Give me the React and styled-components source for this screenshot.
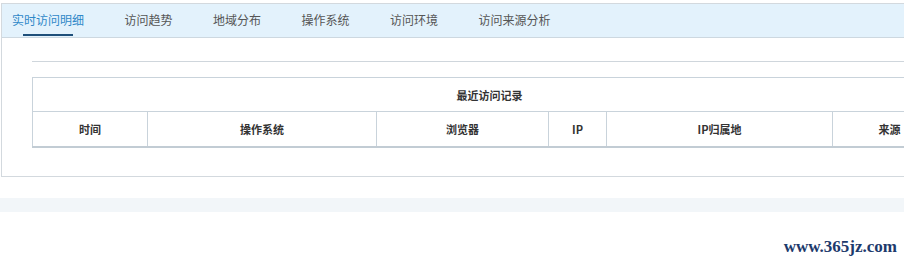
import React from "react";
import styled, { createGlobalStyle } from "styled-components";

const Global = createGlobalStyle`
  html, body { margin: 0; padding: 0; background: #fff; overflow: hidden; }
  body { font-family: "Noto Sans CJK SC", "Noto Sans", sans-serif; color: #333; }
`;

const Page = styled.div`
  width: 904px;
  height: 265px;
  padding-top: 3px;
  box-sizing: border-box;
  display: flex;
  flex-direction: column;
  overflow: hidden;
`;

const Panel = styled.div`
  margin-left: 1px;
  width: 960px;
  border: 1px solid #d3d9de;
  border-right: none;
  box-sizing: border-box;
  padding-bottom: 28px;
`;

const TabBar = styled.div`
  height: 33px;
  background: #e3f2fc;
  border-bottom: 1px solid #cdd8e0;
  display: flex;
  align-items: stretch;
  padding-left: 10px;
  gap: 40.5px;
`;

const Tab = styled.div`
  position: relative;
  display: flex;
  align-items: center;
  font-size: 12px;
  color: ${(p) => (p.$active ? "#2f88c8" : "#555")};
  padding-bottom: 2px;
  &::after {
    content: "";
    display: ${(p) => (p.$active ? "block" : "none")};
    position: absolute;
    left: 50%;
    transform: translateX(-50%);
    bottom: 1px;
    width: 50px;
    height: 2px;
    background: #1e4f7a;
  }
`;

const Body = styled.div`
  padding: 23px 0 0 30px;
`;

const Rule = styled.div`
  height: 1px;
  background: #cfd6dc;
  margin-bottom: 15px;
`;

const Table = styled.table`
  border-collapse: collapse;
  table-layout: fixed;
  width: 914px;
  border-bottom: 2px solid #c2ccd4;
  font-size: 11px;
  font-weight: bold;
  color: #333;
`;

const Cell = styled.th`
  border: 1px solid #c9d3db;
  height: ${(p) => p.$h}px;
  padding: 0;
  text-align: center;
  vertical-align: middle;
  font-weight: bold;
  box-sizing: border-box;
`;

const Band = styled.div`
  margin-top: 21px;
  height: 14px;
  background: #f2f6f9;
`;

const Footer = styled.div`
  display: flex;
  justify-content: flex-end;
  padding: 26px 7px 0 0;
`;

const Watermark = styled.span`
  font-family: "Liberation Serif", "DejaVu Serif", serif;
  font-size: 17px;
  font-weight: bold;
  color: #1d3a6c;
  line-height: 18px;
`;

const tabs = ["实时访问明细", "访问趋势", "地域分布", "操作系统", "访问环境", "访问来源分析"];
const cols = [
  ["时间", 115],
  ["操作系统", 229],
  ["浏览器", 172],
  ["IP", 58],
  ["IP归属地", 226],
  ["来源", 114],
];

export default function App() {
  return (
    <>
      <Global />
      <Page>
        <Panel>
          <TabBar>
            {tabs.map((t, i) => (
              <Tab key={t} $active={i === 0}>{t}</Tab>
            ))}
          </TabBar>
          <Body>
            <Rule />
            <Table>
              <colgroup>
                {cols.map(([n, w]) => (
                  <col key={n} style={{ width: w }} />
                ))}
              </colgroup>
              <thead>
                <tr>
                  <Cell colSpan={6} $h={34}>最近访问记录</Cell>
                </tr>
                <tr>
                  {cols.map(([n]) => (
                    <Cell key={n} $h={35}>{n}</Cell>
                  ))}
                </tr>
              </thead>
            </Table>
          </Body>
        </Panel>
        <Band />
        <Footer>
          <Watermark>www.365jz.com</Watermark>
        </Footer>
      </Page>
    </>
  );
}
